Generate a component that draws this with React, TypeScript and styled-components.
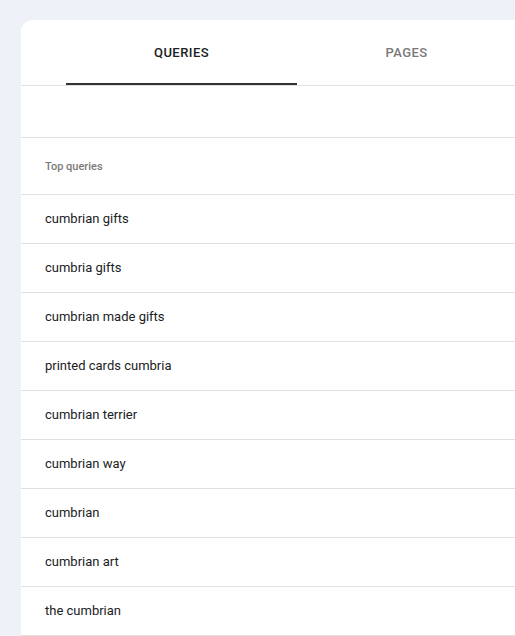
import styled, { createGlobalStyle } from 'styled-components';

const Global = createGlobalStyle`
  html, body {
    margin: 0;
    background: #eef2f8;
    overflow: hidden;
  }
  body {
    font-family: Roboto, "Liberation Sans", Arial, sans-serif;
    -webkit-font-smoothing: antialiased;
  }
`;

const Page = styled.div`
  height: 100vh;
  box-sizing: border-box;
  padding: 20px 0 0 21px;
  overflow: hidden;
`;

const Card = styled.div`
  background: #ffffff;
  border-top-left-radius: 12px;
  min-height: 100%;
`;

const TabBar = styled.div`
  display: flex;
  padding-left: 45px;
  height: 65px;
  border-bottom: 1px solid #e0e0e0;
`;

const Tab = styled.div<{ $active?: boolean; $width: number }>`
  flex: 0 0 ${({ $width }) => $width}px;
  display: flex;
  align-items: center;
  justify-content: center;
  font-size: 13px;
  font-weight: 500;
  letter-spacing: 0.45px;
  color: ${({ $active }) => ($active ? '#202124' : '#7a7a7a')};
  box-sizing: border-box;
  border-bottom: 2px solid ${({ $active }) => ($active ? '#333333' : 'transparent')};
  padding-top: 2px;
`;

const Spacer = styled.div`
  height: 51px;
  border-bottom: 1px solid #e0e0e0;
`;

const Header = styled.div`
  height: 56px;
  display: flex;
  align-items: center;
  padding-left: 24px;
  font-size: 11px;
  font-weight: 500;
  color: #7a7a7a;
  border-bottom: 1px solid #e0e0e0;
`;

const Row = styled.div`
  height: 48px;
  box-sizing: border-box;
  display: flex;
  align-items: center;
  padding: 0 0 2px 24px;
  font-size: 13px;
  color: #202124;
  border-bottom: 1px solid #e0e0e0;
  box-sizing: content-box;
  height: 46px;
`;

const queries = [
  'cumbrian gifts',
  'cumbria gifts',
  'cumbrian made gifts',
  'printed cards cumbria',
  'cumbrian terrier',
  'cumbrian way',
  'cumbrian',
  'cumbrian art',
  'the cumbrian',
];

export default function App(): JSX.Element {
  return (
    <Page>
      <Global />
      <Card>
        <TabBar>
          <Tab $active $width={231}>QUERIES</Tab>
          <Tab $width={219}>PAGES</Tab>
        </TabBar>
        <Spacer />
        <Header>Top queries</Header>
        {queries.map((q) => (
          <Row key={q}>{q}</Row>
        ))}
      </Card>
    </Page>
  );
}
